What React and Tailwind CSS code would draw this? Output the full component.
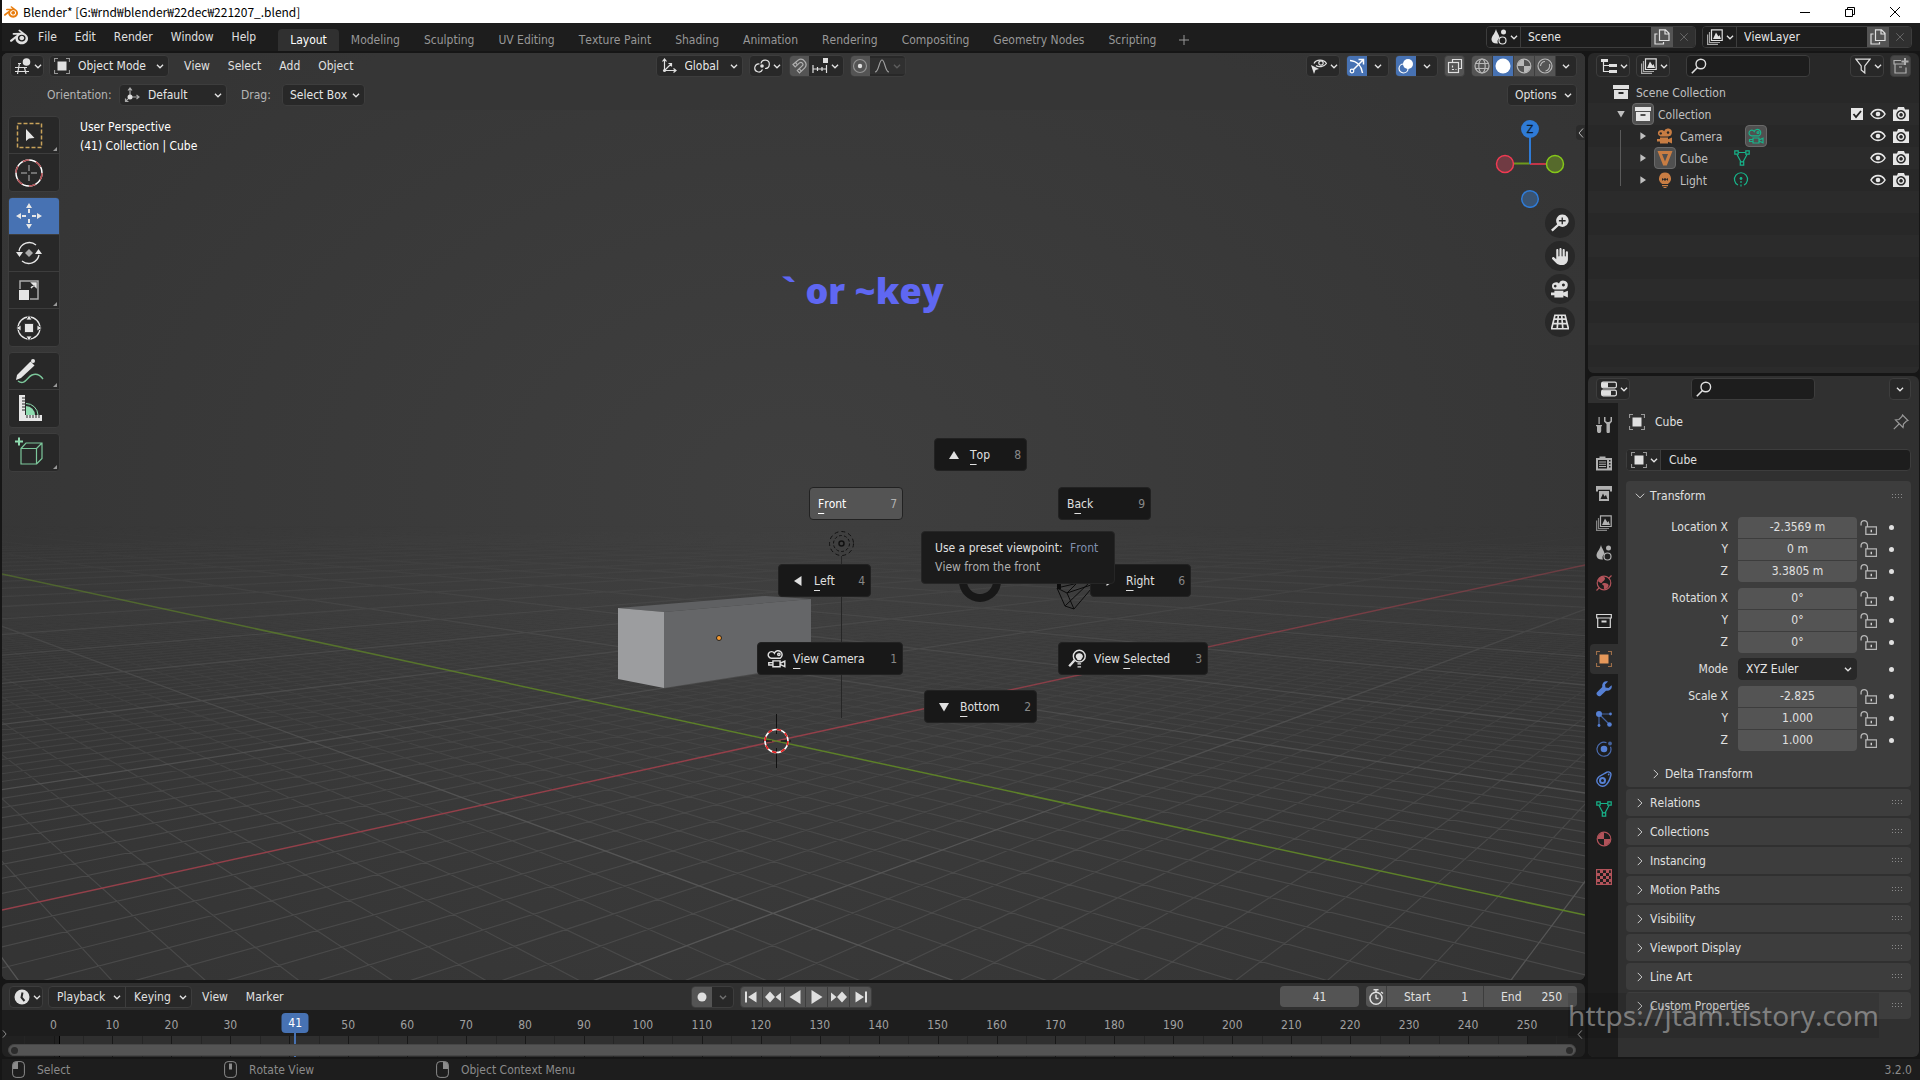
import React from 'react';
import clsx from 'clsx';
import { SiBlender } from 'react-icons/si';
import { FaHand } from 'react-icons/fa6';

const line = { fill: 'none', stroke: 'currentColor', strokeWidth: 1.2 };
const fill = { fill: 'currentColor' };

// 16x16 icon drawings
const ICONS = {
  chevron: <path d="M4.5 6.5 8 10l3.5-3.5" fill="none" stroke="currentColor" strokeWidth="1.5" />,
  chevronRight: <path d="M5 2.5 10.5 8 5 13.5" {...line} />,
  chevronOpen: <path d="M2.5 5 8 10.5 13.5 5" {...line} />,
  view3d: (
    <>
      <path d="M0 9.5h12M0 13.5h14M4.5 5 2.5 16M9.500 9.500 11 16M3 5.500h3" {...line} />
      <circle cx="11.500" cy="4" r="3.800" {...fill} />
    </>
  ),
  objectMode: (
    <>
      <path d="M.5 4V.5H4M12 .5h3.500V4M15.500 12v3.500H12M4 15.500H.5V12" {...line} opacity=".6" />
      <rect x="3.500" y="3.500" width="9" height="9" {...fill} />
    </>
  ),
  axes: (
    <>
      <path d="M3.500 1v11.500H15M3.500 12.500l7-7M1.500 3.500l2-2.500 2 2.500M12.500 10.500l2.500 2-2.500 2M7.500 5.500h3v3" {...line} />
      <circle cx="3.500" cy="12.500" r="1.500" {...fill} />
    </>
  ),
  axesSmall: (
    <>
      <path d="M6 9V1M4 3.500 6 1l2 2.500M8 10h7M12.500 8l2.500 2-2.500 2M4 12l-2.500 2.500M1.500 11.500v3h3" {...line} opacity=".7" />
      <circle cx="6" cy="10" r="2.500" {...fill} />
    </>
  ),
  pivot: (
    <>
      <path d="M8.500 11.500a4 4 0 1 1-3-5.500M7 5.500a4.200 4.200 0 1 1 4 5" {...line} />
      <circle cx="8" cy="8" r="1.800" {...fill} />
    </>
  ),
  magnet: (
    <>
      <path d="M2 6.500 7 2.200a5.200 5.200 0 0 1 6.500 8L8.500 15 6.300 12.500l4.900-4.600a2 2 0 0 0-2.700-3L4.200 9z" {...line} />
      <path d="m4.500 4.500 2 2.300M10.500 13.200l-2.300-2.400" {...line} />
    </>
  ),
  snap: (
    <>
      <path d="M1 7v8M5.500 9v4M10 9v4M14.500 7v8M1 11h13.500" {...line} />
      <rect x="11" y="0" width="5" height="5" {...fill} />
    </>
  ),
  proportional: (
    <>
      <circle cx="8" cy="8" r="6.500" {...line} opacity=".45" />
      <circle cx="8" cy="8" r="2.200" {...fill} />
    </>
  ),
  falloff: <path d="M1 14c4 0 4-12 7-12s3 12 7 12" {...line} />,
  visibility: (
    <>
      <path d="M3 5.500C5 1 13 1 15.500 5.500 13 9 7.500 9.500 5 7.500" {...line} />
      <circle cx="10" cy="5" r="2.200" {...line} />
      <path d="m0 7 8 4-3.500 1L3 16z" {...fill} />
    </>
  ),
  gizmo: (
    <>
      <path d="M1 2.500C8 3 12.500 8 13.500 15M4 12 14 2M9.500 1.500H14.500V6.500" {...line} strokeWidth="1.500" />
      <circle cx="3" cy="13" r="1.800" {...line} />
    </>
  ),
  overlay: (
    <>
      <circle cx="10" cy="6" r="5" {...fill} />
      <circle cx="5.500" cy="10.500" r="4.500" {...line} />
    </>
  ),
  xray: (
    <>
      <path d="M5.500 4.500V1.500h9v9h-3" {...line} />
      <rect x="1.500" y="4.500" width="10" height="10" {...line} />
      <path d="M5.500 7.500v4h4" {...line} strokeDasharray="2 1.500" />
    </>
  ),
  wireSphere: (
    <>
      <circle cx="8" cy="8" r="7" {...line} />
      <ellipse cx="8" cy="8" rx="3.200" ry="7" {...line} />
      <path d="M1.500 5.500h13M1.500 10.500h13" {...line} />
    </>
  ),
  solidSphere: <circle cx="8" cy="8" r="7.500" {...fill} />,
  matSphere: (
    <>
      <circle cx="8" cy="8" r="6.800" {...line} />
      <path d="M8 8V1.500A6.500 6.500 0 0 0 1.500 8zM8 8h6.500A6.500 6.500 0 0 1 8 14.500z" {...fill} />
    </>
  ),
  renderSphere: (
    <>
      <circle cx="8" cy="8" r="7" {...line} />
      <path d="M3.500 8A4.500 4.500 0 0 1 8 3.500M12.500 6c1 3-1 6.500-4 7" {...line} />
    </>
  ),
  scene: (
    <>
      <path d="M5 0c1 4 3.500 6 3.500 9A4 4 0 0 0 7 14.500C3 15 .5 13 .5 10.500.5 7 4 4.500 5 0z" {...fill} />
      <circle cx="12.500" cy="3" r="2.500" {...fill} />
      <circle cx="11.500" cy="11.500" r="3.500" {...line} />
    </>
  ),
  viewLayer: (
    <>
      <path d="M4.500.8h10.700v10.700H4.500z" {...line} />
      <path d="m6 10 3-6.500 2.500 4L12.500 6 14 10z" {...fill} />
      <path d="M2.500 3v10.500H13M.6 5.500v9.900H11" {...line} opacity=".7" />
    </>
  ),
  copy: (
    <>
      <path d="M5.500.8h6l3.500 3.500v7.200H5.500zM11 1v4h4" {...line} />
      <path d="M3.500 5H1v10h8.500v-2" {...line} />
    </>
  ),
  close: <path d="m3 3 10 10M13 3 3 13" {...line} />,
  outliner: (
    <>
      <path d="M0 1h7v3H0zM8 6h8v3H8zM8 12h8v3H8z" {...fill} />
      <path d="M2.500 4v9.500H8M2.500 7.500H8" {...line} />
    </>
  ),
  search: (
    <>
      <circle cx="9.800" cy="6" r="4.800" {...line} strokeWidth="1.400" />
      <path d="M6.500 9.500.8 15.200" {...line} strokeWidth="1.600" />
    </>
  ),
  filter: <path d="M1 1.200h14L9.800 8v7L6.200 12V8z" {...line} />,
  newCollection: (
    <>
      <path d="M8 2.500H1V6h10M2 6v9h11V9.500M6 9h3" {...line} />
      <path d="M12 0v7M8.500 3.500h7" {...line} strokeWidth="2" />
    </>
  ),
  collection: (
    <path fillRule="evenodd" d="M0 1h16v4H0zM1 6h14v9H1zM5.500 8v2h5V8z" {...fill} />
  ),
  collectionLine: (
    <>
      <path d="M.7 1.500h14.600V5H.7zM1.700 5v9.500h12.600V5" {...line} />
      <path d="M5.500 7.500h5v2h-5z" {...fill} />
    </>
  ),
  camera: (
    <>
      <path fillRule="evenodd" d="M3.500 2.200a3 3 0 0 1 3.600 1A4 4 0 1 1 11 8.500H3.500a3.200 3.200 0 0 1 0-6.300zM3.700 4.200a1.200 1.200 0 1 0 .1 0zM11 3.200a1.300 1.300 0 1 0 .1 0z" {...fill} />
      <path d="M3 9.500h8v1.700l4-1.700v6l-4-1.700v1.700H3zM0 11h3v2.500H0z" {...fill} />
    </>
  ),
  cameraLine: (
    <>
      <path d="M3.500 7.800a2.800 2.800 0 1 1 2.700-4.300 3.400 3.400 0 1 1 4.800 4.300zM5 10h6v5H5zM11 12l4-1.800v4.600L11 13M5 11.500H1.500v2H5" {...line} />
      <circle cx="10" cy="4.500" r="1" {...line} />
    </>
  ),
  meshTri: <path fillRule="evenodd" d="M.5 1h15L9.800 15.500H6.200zM5 4l3 7.500L11 4z" {...fill} />,
  meshData: (
    <>
      <path d="M3 4.500 7 12M13 4.500 9 12M4.500 2.500h7" {...line} />
      <path d="M.8.8h3.400v3.400H.8zM11.800.8h3.400v3.400h-3.400zM6.300 11.800h3.400v3.400H6.300z" {...line} />
    </>
  ),
  bulb: (
    <path fillRule="evenodd" d="M8 .5a6 6 0 0 1 3.300 11V12H4.700v-.5A6 6 0 0 1 8 .5zM5 6v3l1.500-1.500L8 9l1.500-1.500L11 9V6L9.500 7 8 6 6.500 7zM5 13h6v1.200H5zM6.500 15h3v1h-3z" {...fill} />
  ),
  lightData: (
    <>
      <path d="M5 13A6.500 6.500 0 1 1 11 13" {...line} />
      <circle cx="8" cy="6.500" r="1.400" {...fill} />
      <path d="M8 9v7" {...line} strokeDasharray="2 1.500" />
    </>
  ),
  eye: (
    <>
      <path d="M1 8c3-5.800 11-5.800 14 0-3 5.800-11 5.800-14 0z" fill="none" stroke="currentColor" strokeWidth="1.600" />
      <circle cx="8" cy="8" r="2.300" {...fill} />
    </>
  ),
  photo: (
    <path fillRule="evenodd" d="M0 3.500h4L5 1h6l1 2.500h4V15H0zM8 4a4.800 4.800 0 1 0 .1 0zM8 5.500a3.300 3.300 0 1 1-.1 0zM8 7a1.800 1.800 0 1 0 .1 0z" {...fill} />
  ),
  properties: (
    <>
      <rect x=".6" y="1.200" width="14.800" height="5.600" rx="1.500" {...line} />
      <rect x=".6" y="9.200" width="14.800" height="5.600" rx="1.500" {...line} />
      <path d="M1 1.500h6v5H1zM1 9.500h9v5H1z" {...fill} />
    </>
  ),
  pin: <path d="m9.500 1 5.500 5.500-1.500.5-3 3-.5 3.500L2.500 6 6 5.500l3-3zM6 10 .8 15.200" {...line} />,
  tool: (
    <>
      <path d="M2.500 0h1.200v7H2.500zM1 8.500h4.200V14a2.100 2.100 0 0 1-4.200 0zM0 8h6v1.300H0z" {...fill} />
      <path d="M8 0v4.500L10.500 7v7.500a1.700 1.700 0 0 0 3.400 0V7L16 4.500V0h-1.500v4L13 5h-2L9.500 4V0z" {...fill} />
    </>
  ),
  render: (
    <path fillRule="evenodd" d="M3.500 1.500h6V3H16v12.500H0V3h3.500zM2 5v8.500h9V5zM13 5v1.500h1.500V5zM13 8v1.500h1.500V8zM13 11v1.500h1.500V11zM3 6.500h7v1H3zM3 8.700h7v1H3zM3 11h7v1H3z" {...fill} />
  ),
  output: (
    <>
      <path d="M0 1h16v5.500h-2V4.800H2v1.700H0z" {...fill} />
      <path fillRule="evenodd" d="M3 6h10v10H3zM4.500 14h7L10 10l-1.500 1.500L7 8.500z" {...fill} />
    </>
  ),
  world: (
    <>
      <circle cx="8" cy="8" r="6.800" {...line} />
      <path d="M3 3c3-2 6-1.500 6 .5S7 6 6 7.500 3 7 2 6zM8 8c3 0 5 1 4.500 3S10 14.500 8.500 14 9 11 7 10s0-2 1-2z" {...fill} />
      <path d="m12.500 3.500 3-3M.5 15.500l3-3" {...line} />
    </>
  ),
  wrench: (
    <path d="M15.500 4.200 12.500 7l-3-.5L9 3.500 12 .5C8.500-.6 5.500 2 6.300 6L1 11.300c-1.800 2 1.500 5.300 3.700 3.500L10 9.700c4 .8 6.800-2.500 5.500-5.500z" {...fill} />
  ),
  particles: (
    <>
      <circle cx="3" cy="3" r="3" {...fill} />
      <circle cx="14.500" cy="3" r="1.400" {...fill} />
      <circle cx="3" cy="14.500" r="1.400" {...fill} />
      <circle cx="13.500" cy="13.500" r="2.300" {...fill} />
      <path d="M3 3h11M3 3v11M3 3l10 10" {...line} opacity=".7" />
    </>
  ),
  physics: (
    <>
      <circle cx="8" cy="8" r="3.300" {...fill} />
      <path d="M10.500 1.700a7 7 0 1 0 4 4" {...line} opacity=".8" />
      <circle cx="14" cy="2.500" r="1.900" {...fill} opacity=".7" />
    </>
  ),
  constraint: (
    <>
      <path d="M1.500 7.500C4 4 8 3 11 1.200c2.500-1 4.500 1 3.800 3.300C14 8 13 11 10.500 13.500c-5 4.500-11.500-1-9-6z" {...line} strokeWidth="1.400" />
      <circle cx="6.500" cy="9.500" r="2.500" fill="none" stroke="currentColor" strokeWidth="2" />
      <circle cx="12.700" cy="3.500" r=".9" {...fill} />
    </>
  ),
  texture: (
    <>
      <path d="M.6.6h14.800v14.800H.6z" {...line} />
      <path d="M4 1h3v3H4zM10 1h3v3h-3zM1 4h3v3H1zM7 4h3v3H7zM13 4h2v3h-2zM4 7h3v3H4zM10 7h3v3h-3zM1 10h3v3H1zM7 10h3v3H7zM13 10h2v3h-2zM4 13h3v2H4zM10 13h3v2h-3z" {...fill} />
    </>
  ),
  unlock: (
    <>
      <path d="M1 6V4.500a3 3 0 0 1 6 0V7M5.500 7.500h10v7h-10z" {...line} opacity=".75" />
      <path d="M10 10h1.200v2.500H10z" {...fill} />
    </>
  ),
  clock: (
    <>
      <circle cx="8" cy="8" r="7.500" {...fill} />
      <path d="M8.500 3.500 7.500 8.500l3 3.500" fill="none" stroke="#282828" strokeWidth="2" />
    </>
  ),
  record: <circle cx="8" cy="8" r="4.500" {...fill} />,
  jumpStart: <path d="M2 2.500h2v11H2zM13.500 2.500v11L5 8z" {...fill} />,
  prevKey: <path d="m5 2.500 5 5.500-5 5.500L0 8zM16 3.500v9L10.500 8z" {...fill} />,
  playBack: <path d="M13.500 1v14L2.500 8z" {...fill} />,
  play: <path d="M2.500 1v14l11-7z" {...fill} />,
  nextKey: <path d="m11 2.500 5 5.500-5 5.500L6 8zM0 3.500v9L5.500 8z" {...fill} />,
  jumpEnd: <path d="M12 2.500h2v11h-2zM2.500 2.500v11L11 8z" {...fill} />,
  stopwatch: (
    <>
      <circle cx="8" cy="9.200" r="6" {...line} strokeWidth="1.500" />
      <path d="M5.500.7h5M8 1v2.500M13 3l2 1.500M8 9.500V5.500M8 9.500h2.500" {...line} strokeWidth="1.500" />
    </>
  ),
  viewSelected: (
    <>
      <circle cx="9.500" cy="6" r="5" {...line} />
      <path d="M5.500 9.500 1 14.500" {...line} strokeWidth="2" />
      <path d="M7 6.500a2.500 2.500 0 0 1 5 0L10.500 9h-2zM8 12.500h3M8 15h3" stroke="currentColor" {...fill} />
    </>
  ),
  triUp: <path d="M8 4 13 12H3z" {...fill} />,
  triDown: <path d="M3 4h10L8 12.500z" {...fill} />,
  triLeft: <path d="M11.500 3v10L4 8z" {...fill} />,
  triRight: <path d="M4.500 3v10L12 8z" {...fill} />,
  magnify: (
    <>
      <path d="M10 .5a5.500 5.500 0 1 1-3 10L1.500 15.500 0 14l5.500-5A5.500 5.500 0 0 1 10 .5z" {...fill} />
      <path d="M10 3v6M7 6h6" stroke="#282828" strokeWidth="1.200" />
    </>
  ),
  ortho: <path d="M3.500 2h9L15.500 14H.5zM2.500 5.500h11M1.500 9.500h13M6.500 2 5.500 14M9.500 2l1 12" {...line} strokeWidth="1.500" />,
};

const Icon = ({ name, className = 'size-4' }) => (
  <svg viewBox="0 0 16 16" className={clsx('shrink-0', className)} aria-hidden="true">
    {ICONS[name]}
  </svg>
);

const box = 'rounded border border-[#3d3d3d] bg-[#282828]';

const IconDrop = ({ icon, label, className = 'w-[34px]' }) => (
  <button aria-label={label} className={clsx('flex h-[22px] shrink-0 items-center justify-between pl-1 pr-px', box, className)}>
    <Icon name={icon} />
    <Icon name="chevron" className="size-[14px]" />
  </button>
);

const Select = ({ label, value, icon, className, selectClass }) => (
  <div className={clsx('relative flex h-[22px] shrink-0 items-center', box, className)}>
    {icon && <Icon name={icon} className="ml-1 size-4" />}
    <select
      aria-label={label}
      defaultValue={value}
      className={clsx('h-full min-w-0 flex-1 appearance-none bg-transparent text-[#e6e6e6] outline-none', selectClass)}
    >
      <option>{value}</option>
    </select>
    <Icon name="chevron" className="pointer-events-none absolute right-px size-[14px]" />
  </div>
);

const MenuButton = ({ children }) => <button className="h-[22px] px-[9px]">{children}</button>;

const SearchField = () => (
  <label className="flex h-[22px] w-[124px] items-center rounded border border-[#3d3d3d] bg-[#1d1d1d] px-1">
    <Icon name="search" />
    <input type="search" aria-label="Search" className="w-full min-w-0 bg-transparent px-1 outline-none" />
  </label>
);

const TitleBar = () => (
  <div className="flex h-[23px] shrink-0 items-center bg-white text-black">
    <SiBlender className="ml-[2px] size-[14px] text-[#e87d0d]" />
    <h1 className="ml-[5px] font-['Noto_Sans_CJK_KR',sans-serif] text-[12px]">Blender* [G:₩rnd₩blender₩22dec₩221207_.blend]</h1>
    <div className="ml-auto flex pr-[3px]">
      {['M3 8.500h10', 'M3.500 5.500h7v7h-7zM5.500 5.500v-2h7v7h-2', 'm3 3 10 10M13 3 3 13'].map((d, i) => (
        <button key={d} aria-label={['Minimize', 'Restore', 'Close'][i]} className="flex h-[22px] w-[45px] items-center justify-center">
          <svg viewBox="0 0 16 16" className="size-4">
            <path d={d} fill="none" stroke="black" />
          </svg>
        </button>
      ))}
    </div>
  </div>
);

const IdField = ({ icon, value, className }) => (
  <div className={clsx('flex h-[22px] overflow-hidden rounded border border-[#3d3d3d] bg-[#1d1d1d]', className)}>
    <button aria-label={`Browse ${value}`} className="flex w-[34px] shrink-0 items-center justify-between border-r border-[#3d3d3d] bg-[#1d1d1d] pl-1 pr-px">
      <Icon name={icon} />
      <Icon name="chevron" className="size-[14px]" />
    </button>
    <input aria-label={`${value} name`} defaultValue={value} className="min-w-0 flex-1 bg-transparent px-[7px] text-[#e6e6e6] outline-none" />
    <button aria-label={`New ${value}`} className="flex w-[22px] items-center justify-center bg-[#545454]">
      <Icon name="copy" />
    </button>
    <button aria-label={`Remove ${value}`} className="flex w-[22px] items-center justify-center bg-[#303030] text-[#6a6a6a]">
      <Icon name="close" className="size-3" />
    </button>
  </div>
);

const WORKSPACES = [
  'Layout', 'Modeling', 'Sculpting', 'UV Editing', 'Texture Paint', 'Shading',
  'Animation', 'Rendering', 'Compositing', 'Geometry Nodes', 'Scripting',
];

const TopBar = () => (
  <header className="flex h-7 shrink-0 items-start bg-[#1d1d1d] pl-2 pr-2">
    <SiBlender className="mt-[5px] size-[18px]" />
    <nav className="ml-px mt-[3px] flex">
      {['File', 'Edit', 'Render', 'Window', 'Help'].map((m) => (
        <MenuButton key={m}>{m}</MenuButton>
      ))}
    </nav>
    <nav className="ml-[13px] mt-[6px] flex">
      {WORKSPACES.map((w, i) => (
        <button key={w} className={clsx('h-[22px] rounded-t px-3', i === 0 ? 'bg-[#303030] text-white' : 'text-[#989898]')}>
          {w}
        </button>
      ))}
      <button aria-label="Add workspace" className="flex w-8 items-center justify-center text-[#989898]">
        <svg viewBox="0 0 10 10" className="size-[10px]">
          <path d="M5 0v10M0 5h10" stroke="currentColor" />
        </svg>
      </button>
    </nav>
    <div className="ml-auto mt-[3px] flex gap-[6px]">
      <IdField icon="scene" value="Scene" className="w-[210px]" />
      <IdField icon="viewLayer" value="ViewLayer" className="w-[210px]" />
    </div>
  </header>
);

const ToggleDrop = ({ icon, label, on, dim }) => (
  <div className={clsx('flex h-[22px] overflow-hidden', box)}>
    <button aria-label={label} className={clsx('flex w-5 items-center justify-center', on ? 'bg-[#4772b3] text-white' : 'bg-[#545454]')}>
      <Icon name={icon} />
    </button>
    <button aria-label={`${label} options`} className={clsx('flex w-[21px] items-center justify-center', dim && 'opacity-40')}>
      <Icon name="chevron" className="size-[14px]" />
    </button>
  </div>
);

const ViewportHeader = () => (
  <div className="relative flex flex-col gap-[7px] bg-[#353535]/60 px-[8px] pb-1 pt-[2px]">
    <div className="grid grid-cols-[1fr_auto_1fr] items-center">
      <div className="flex items-center">
        <IconDrop icon="view3d" label="Editor type" />
        <Select label="Mode" icon="objectMode" value="Object Mode" className="ml-[5px] w-[120px]" selectClass="pl-2" />
        <div className="ml-[6px] flex">
          {['View', 'Select', 'Add', 'Object'].map((m) => (
            <MenuButton key={m}>{m}</MenuButton>
          ))}
        </div>
      </div>
      <div className="mr-[26px] flex gap-[6px]">
        <Select label="Transform orientation" icon="axes" value="Global" className="w-[87px]" selectClass="pl-2" />
        <IconDrop icon="pivot" label="Pivot point" />
        <div className={clsx('flex h-[22px] w-[55px] items-center overflow-hidden', box)}>
          <button aria-label="Snap" className="flex h-full w-5 items-center justify-center bg-[#545454] text-[#b0b0b0]">
            <Icon name="magnet" />
          </button>
          <button aria-label="Snap to" className="flex flex-1 items-center justify-between pl-[3px] pr-px">
            <Icon name="snap" />
            <Icon name="chevron" className="size-[14px]" />
          </button>
        </div>
        <div className={clsx('flex h-[22px] w-[56px] items-center overflow-hidden', box)}>
          <button aria-label="Proportional editing" className="flex h-full w-5 items-center justify-center bg-[#545454]">
            <Icon name="proportional" />
          </button>
          <button aria-label="Falloff" className="flex flex-1 items-center justify-between bg-[#303030] pl-1 pr-px text-[#a0a0a0]">
            <Icon name="falloff" />
            <Icon name="chevron" className="size-[14px] opacity-40" />
          </button>
        </div>
      </div>
      <div className="flex justify-end gap-[6px]">
        <IconDrop icon="visibility" label="Object visibility" />
        <ToggleDrop icon="gizmo" label="Gizmos" on />
        <ToggleDrop icon="overlay" label="Overlays" on />
        <button aria-label="X-ray" className="flex h-[22px] w-[21px] items-center justify-center rounded border border-[#3d3d3d] bg-[#545454]">
          <Icon name="xray" />
        </button>
        <div className={clsx('flex h-[22px] w-[106px] overflow-hidden', box)}>
          {['wireSphere', 'solidSphere', 'matSphere', 'renderSphere'].map((s, i) => (
            <button
              key={s}
              aria-label={s}
              className={clsx('flex flex-1 items-center justify-center border-r border-[#3d3d3d]', i === 1 ? 'bg-[#4772b3] text-white' : 'bg-[#545454] text-[#b8b8b8]')}
            >
              <Icon name={s} />
            </button>
          ))}
          <button aria-label="Shading options" className="flex flex-1 items-center justify-center">
            <Icon name="chevron" className="size-[14px]" />
          </button>
        </div>
      </div>
    </div>
    <div className="flex items-center">
      <label className="ml-[37px] w-[65px] text-[#b5b5b5]">Orientation:</label>
      <Select label="Orientation" icon="axesSmall" value="Default" className="ml-[7px] w-[108px]" selectClass="pl-2" />
      <label className="ml-[14px] w-[30px] text-[#b5b5b5]">Drag:</label>
      <Select label="Drag" value="Select Box" className="ml-[11px] w-[83px]" selectClass="pl-[7px]" />
      <button className={clsx('ml-auto flex h-[22px] w-[70px] items-center justify-between pl-[7px] pr-px', box)}>
        Options
        <Icon name="chevron" className="size-[14px]" />
      </button>
    </div>
  </div>
);

// ground plane to screen, in the 1583x927 space of the viewport drawing
const A = 0.0212;
const B = 0.0208;
const project = (x, y) => {
  const w = 1 + A * x + B * y;
  return `${((774 + A * x * 1866.6 - B * y * 331) / w).toFixed(1)} ${((688 + (w - 1) * 450) / w).toFixed(1)}`;
};

const gridPath = (keep, far) => {
  let d = '';
  for (let i = -200; i <= 200; i++) {
    if (!keep(i)) continue;
    d += `M${project(i, (0.42 - 1 - A * i) / B)}L${project(i, (far - 1 - A * i) / B)}`;
    d += `M${project((0.42 - 1 - B * i) / A, i)}L${project((far - 1 - B * i) / A, i)}`;
  }
  return d;
};
const minorGrid = gridPath((i) => i % 10 !== 0, 8);
const majorGrid = gridPath((i) => i % 10 === 0 && i !== 0, 14);

const SceneCanvas = () => (
  <svg viewBox="0 0 1583 927" preserveAspectRatio="xMidYMid slice" className="absolute inset-0 size-full">
    <defs>
      <radialGradient id="bg" gradientUnits="userSpaceOnUse" cx="791" cy="440" r="1000" gradientTransform="translate(0 120) scale(1 .72)">
        <stop offset="0" stopColor="#3f3f3f" />
        <stop offset="1" stopColor="#343434" />
      </radialGradient>
      <linearGradient id="fadeMinor" x1="0" y1="0" x2="0" y2="927" gradientUnits="userSpaceOnUse">
        <stop offset=".53" stopColor="#000" />
        <stop offset=".63" stopColor="#444" />
        <stop offset=".85" stopColor="#fff" />
      </linearGradient>
      <linearGradient id="fadeMajor" x1="0" y1="0" x2="0" y2="927" gradientUnits="userSpaceOnUse">
        <stop offset=".51" stopColor="#000" />
        <stop offset=".62" stopColor="#777" />
        <stop offset=".85" stopColor="#fff" />
      </linearGradient>
      <linearGradient id="axisFade" x1="0" y1="0" x2="0" y2="927" gradientUnits="userSpaceOnUse">
        <stop offset=".5" stopColor="#666" />
        <stop offset=".72" stopColor="#fff" />
      </linearGradient>
      <mask id="minor"><rect width="1583" height="927" fill="url(#fadeMinor)" /></mask>
      <mask id="major"><rect width="1583" height="927" fill="url(#fadeMajor)" /></mask>
      <mask id="axis"><rect width="1583" height="927" fill="url(#axisFade)" /></mask>
    </defs>
    <rect width="1583" height="927" fill="url(#bg)" />
    <path d={minorGrid} stroke="#494949" strokeWidth="1.200" mask="url(#minor)" />
    <path d={majorGrid} stroke="#555" strokeWidth="1.300" mask="url(#major)" />
    <g mask="url(#axis)" strokeWidth="1.500">
      <path d="M0 857 774 688 1583 512" stroke="#93404a" />
      <path d="M0 521 774 688 1583 862" stroke="#5d8029" />
    </g>

    {/* stretched cube */}
    <path d="M616 555 763 543 809 546 662 559z" fill="#5f6062" />
    <path d="M662 559 809 546V612L662 635z" fill="#656668" />
    <path d="M616 555 662 559V635L616 626z" fill="#9c9d9f" />
    <circle cx="717" cy="585" r="2.500" fill="#f79a2e" stroke="#222" />

    {/* light */}
    <g fill="none" stroke="#111">
      <circle cx="839.500" cy="490.500" r="12" strokeDasharray="4 3" />
      <circle cx="839.500" cy="490.500" r="8" strokeDasharray="3 2" />
      <circle cx="839.500" cy="490.500" r="2.500" strokeWidth="1.500" />
      <path d="M839.500 503V665" stroke="#262626" />
    </g>

    {/* camera wire */}
    <path d="M1055 535l10 5 24-24M1055 535l8 18 9 3 17-20M1065 540l7 16M1055 535l34-8M1063 553l26-25M1065 540l24-8" fill="none" stroke="#0c0c0c" />
    <path d="M1055 530h4v6h-4z" fill="#0c0c0c" />

    {/* 3D cursor */}
    <path d="M774.500 661v20M774.500 695v20M761 688h9M779 688h10" stroke="#111" />
    <circle cx="774.500" cy="688" r="11.500" fill="none" stroke="#fff" strokeWidth="1.600" />
    <circle cx="774.500" cy="688" r="11.500" fill="none" stroke="#e81e1e" strokeWidth="1.600" strokeDasharray="4.500 4.500" />

    {/* pie menu centre */}
    <circle cx="978" cy="528" r="17" fill="none" stroke="#181818" strokeWidth="8" />
  </svg>
);

const white = '#e6e6e6';
const TOOL_ART = {
  'Select Box': (
    <>
      <rect x="2.500" y="2.500" width="24" height="24" fill="none" stroke="#c8a25a" strokeWidth="1.500" strokeDasharray="4 2" />
      <path d="M11 8v12l3-2.500 5.500-.5z" fill={white} />
    </>
  ),
  Cursor: (
    <>
      <circle cx="14" cy="14" r="13" fill="none" stroke="#fff" strokeWidth="1.500" />
      <circle cx="14" cy="14" r="13" fill="none" stroke="#b04a4f" strokeWidth="1.500" strokeDasharray="6.800 6.800" />
      <path d="M14 6v6M14 16v6M6 14h6M16 14h6" stroke="#888" strokeWidth="1.500" />
    </>
  ),
  Move: (
    <>
      <path d="M14 1l3 5h-6zM14 27l3-5h-6zM1 14l5-3v6zM27 14l-5-3v6z" fill={white} />
      <path d="M14 7v4M14 17v4M7 14h4M17 14h4" stroke={white} strokeWidth="2" />
    </>
  ),
  Rotate: (
    <>
      <path d="M4 12a10.500 10.500 0 0 1 17-6M24 16a10.500 10.500 0 0 1-17 6" fill="none" stroke={white} strokeWidth="1.300" />
      <path d="M1 13h7l-3.500 5zM20 15h7l-3.500-5z" fill={white} />
      <path d="m14 10 4 4-4 4-4-4z" fill="#aaa" />
    </>
  ),
  Scale: (
    <>
      <path d="M5 13V5h18v18h-8" fill="none" stroke="#aaa" strokeWidth="1.500" />
      <path d="M4 14h10v10H4z" fill={white} />
      <path d="m16 12 4-4M17 7h4v4z" stroke={white} strokeWidth="1.500" fill={white} />
    </>
  ),
  Transform: (
    <>
      <circle cx="14" cy="14" r="11" fill="none" stroke={white} strokeWidth="1.300" />
      <path d="M9.500 9.500h9v9h-9zM14 1l3 5h-6zM14 27l3-5h-6zM1 14l5-3v6zM27 14l-5-3v6z" fill={white} stroke="#282828" strokeWidth=".8" />
    </>
  ),
  Annotate: (
    <>
      <path d="M3 24c7 5 9-4 14-6s8 0 11 4" fill="none" stroke="#7cc79b" strokeWidth="1.400" />
      <path d="M1 23l1-5L15.500 4.500l4 4L6 21z" fill={white} />
      <circle cx="18" cy="4" r="2" fill={white} />
    </>
  ),
  Measure: (
    <>
      <path d="M4 0h6v20h17v6H4z" fill={white} />
      <path d="M7 3h3M7 6h3M7 9h3M7 12h3M7 15h3M12 20v3M15 20v3M18 20v3M21 20v3M24 20v3" stroke="#282828" />
      <path d="M11 20v-9a9 9 0 0 1 9 9z" fill="#8fdcb0" />
      <path d="M11 8.500A12 12 0 0 1 23 20" fill="none" stroke="#8fdcb0" />
    </>
  ),
  'Add Cube': (
    <>
      <path d="M6 9.500h15.500V25H6zM6 9.500 11 4h16v15.500L21.500 25M21.500 9.500 27 4" fill="none" stroke="#7cc79b" strokeWidth="1.200" />
      <path d="M4-1.500v8M0 2.500h8" stroke="#8fdcb0" strokeWidth="2" />
    </>
  ),
};

const TOOL_GROUPS = [
  ['Select Box', 'Cursor'],
  ['Move', 'Rotate', 'Scale', 'Transform'],
  ['Annotate', 'Measure'],
  ['Add Cube'],
];
const WITH_FLYOUT = ['Select Box', 'Scale', 'Annotate', 'Add Cube'];

const Toolbar = () => (
  <div className="flex flex-col gap-[5px]">
    {TOOL_GROUPS.map((group) => (
      <div key={group[0]} className={clsx('flex w-[52px] flex-col divide-y divide-[#3d3d3d] overflow-hidden', box)}>
        {group.map((tool) => (
          <button key={tool} aria-label={tool} className={clsx('relative flex h-[37px] items-center pl-[6px]', tool === 'Move' && 'bg-[#4772b3]')}>
            <svg viewBox="0 0 28 28" className="size-7 overflow-visible">
              {TOOL_ART[tool]}
            </svg>
            {WITH_FLYOUT.includes(tool) && (
              <svg viewBox="0 0 4 4" className="absolute bottom-[2px] right-[2px] size-1">
                <path d="M4 0v4H0z" fill="#999" />
              </svg>
            )}
          </button>
        ))}
      </div>
    ))}
  </div>
);

const NavGizmo = () => (
  <svg viewBox="0 0 70 90" className="mr-[10px] h-[90px] w-[70px]">
    <path d="M10 45.500h25" stroke="#6f9a1c" strokeWidth="2" />
    <path d="M35 46h20" stroke="#c23548" strokeWidth="2" />
    <path d="M35 46V12" stroke="#2f7bd6" strokeWidth="2" />
    <circle cx="10" cy="46" r="8.500" fill="#703b43" stroke="#f03a52" strokeWidth="1.500" />
    <circle cx="60" cy="46" r="8.500" fill="#566a2c" stroke="#85c819" strokeWidth="1.500" />
    <circle cx="35" cy="81" r="8.300" fill="#3a5472" stroke="#2f7bd6" strokeWidth="1.500" />
    <circle cx="35" cy="11" r="9" fill="#2f7bd6" />
    <text x="35" y="15" textAnchor="middle" fontSize="11" fill="#0b1c30" stroke="#0b1c30" strokeWidth=".3">Z</text>
  </svg>
);

const NavButtons = () => (
  <div className="flex flex-col gap-[3px]">
    {['magnify', 'hand', 'camera', 'ortho'].map((n) => (
      <button key={n} aria-label={n} className="flex size-[30px] items-center justify-center rounded-full bg-[#282828]">
        {n === 'hand' ? <FaHand className="size-[17px]" /> : <Icon name={n} className="size-[18px]" />}
      </button>
    ))}
  </div>
);

// label is split around its mnemonic letter
const PIE = [
  { pos: 'left-[932px] top-[385px] w-[93px]', icon: 'triUp', label: ['', 'T', 'op'], hint: 8 },
  { pos: 'left-[807px] top-[434px] w-[94px]', label: ['', 'F', 'ront'], hint: 7, active: true },
  { pos: 'left-[1056px] top-[434px] w-[93px]', label: ['B', 'a', 'ck'], hint: 9 },
  { pos: 'left-[776px] top-[511px] w-[93px]', icon: 'triLeft', label: ['', 'L', 'eft'], hint: 4 },
  { pos: 'left-[1088px] top-[511px] w-[101px]', icon: 'triRight', label: ['', 'R', 'ight'], hint: 6 },
  { pos: 'left-[755px] top-[589px] w-[146px]', icon: 'cameraLine', big: true, label: ['', 'V', 'iew Camera'], hint: 1 },
  { pos: 'left-[1056px] top-[589px] w-[150px]', icon: 'viewSelected', big: true, label: ['View ', 'S', 'elected'], hint: 3 },
  { pos: 'left-[922px] top-[637px] w-[113px]', icon: 'triDown', label: ['', 'B', 'ottom'], hint: 2 },
];

const PieMenu = () => (
  <>
    {PIE.map(({ pos, icon, big, label, hint, active }) => (
      <button
        key={hint}
        className={clsx(
          'absolute flex h-[33px] items-center rounded border pl-2 pr-[5px]',
          pos,
          active ? 'border-[#222] bg-[#545454] text-white' : 'border-[#222] bg-[#181818]'
        )}
      >
        {icon && <Icon name={icon} className={big ? 'ml-px mr-[7px] size-[19px]' : 'ml-[3px] mr-2 size-4'} />}
        <span>
          {label[0]}
          <u className="underline-offset-[5px]">{label[1]}</u>
          {label[2]}
        </span>
        <span className={clsx('ml-auto', active ? 'text-[#b0b0b0]' : 'text-[#888]')}>{hint}</span>
      </button>
    ))}
    <div role="tooltip" className="absolute left-[919px] top-[478px] w-[194px] rounded border border-[#262626] bg-[#1b1b1b] px-[13px] pb-[6px] pt-[7px] leading-[19px]">
      <p className="whitespace-nowrap">
        Use a preset viewpoint: <span className="ml-1 text-[#8090b0]">Front</span>
      </p>
      <p className="text-[#b0b0b0]">View from the front</p>
    </div>
  </>
);

const Viewport = () => (
  <main className="relative min-h-0 flex-1 overflow-hidden rounded-md bg-[#393939]">
    <SceneCanvas />
    <ViewportHeader />
    <div className="relative flex items-start pl-[6px] pr-[10px] pt-[6px]">
      <Toolbar />
      <div className="ml-5 pt-[2px] leading-[19px] text-white">
        <p>User Perspective</p>
        <p>(41) Collection | Cube</p>
      </div>
      <div className="ml-auto flex flex-col items-end pt-[2px]">
        <NavGizmo />
        <NavButtons />
      </div>
    </div>
    <button aria-label="Show sidebar" className="absolute right-0 top-[72px] flex h-[15px] w-[9px] items-center justify-center rounded-l bg-[#2b2b2b]">
      <svg viewBox="0 0 6 10" className="h-[10px] w-[6px]">
        <path d="M5 .5 1 5l4 4.500" fill="none" stroke="#bbb" />
      </svg>
    </button>
    <p className="absolute left-[779px] top-[214px] whitespace-pre font-['Open_Sans',sans-serif] text-[36px] font-extrabold leading-[48px] text-[#5f67f2]">` or ~key</p>
    <PieMenu />
  </main>
);

// frame number to percent of the timeline's width
const frameX = (f) => `${((51.5 + f * 5.894) / 1583) * 100}%`;
const TENS = Array.from({ length: 26 }, (_, i) => i * 10);
const FIVES = Array.from({ length: 53 }, (_, i) => i * 5 - 5);

const Timeline = () => (
  <section className="shrink-0 overflow-hidden rounded-md bg-[#1d1d1d]">
    <div className="flex h-[27px] items-center bg-[#303030] px-[7px]">
      <div className="flex flex-1 items-center">
        <IconDrop icon="clock" label="Editor type" />
        <div className={clsx('ml-[5px] flex h-[22px] divide-x divide-[#3d3d3d]', box)}>
          <button className="flex w-[77px] items-center justify-between pl-2 pr-px">
            Playback <Icon name="chevron" className="size-[14px]" />
          </button>
          <button className="flex w-[65px] items-center justify-between pl-2 pr-px">
            Keying <Icon name="chevron" className="size-[14px]" />
          </button>
        </div>
        <div className="ml-px flex">
          <MenuButton>View</MenuButton>
          <MenuButton>Marker</MenuButton>
        </div>
      </div>
      <div className="mr-[24px] flex gap-[6px]">
        <ToggleDrop icon="record" label="Auto keying" dim />
        <div className="flex h-[22px] w-[132px] overflow-hidden rounded border border-[#3d3d3d] bg-[#545454]">
          {['jumpStart', 'prevKey', 'playBack', 'play', 'nextKey', 'jumpEnd'].map((n) => (
            <button key={n} aria-label={n} className="flex flex-1 items-center justify-center border-r border-[#3d3d3d] last:border-r-0">
              <Icon name={n} />
            </button>
          ))}
        </div>
      </div>
      <div className="flex flex-1 justify-end">
        <input aria-label="Current frame" defaultValue="41" className="h-[21px] w-[79px] rounded bg-[#545454] text-center outline-none" />
        <div className="ml-[7px] mr-px flex h-[21px] divide-x divide-[#3d3d3d] overflow-hidden rounded bg-[#545454]">
          <button aria-label="Use preview range" className="flex w-[21px] items-center justify-center">
            <Icon name="stopwatch" />
          </button>
          <label className="flex w-[97px] items-center justify-between pl-[17px] pr-[15px]">
            Start <input defaultValue="1" className="w-8 bg-transparent text-right outline-none" />
          </label>
          <label className="flex w-[93px] items-center justify-between pl-[17px] pr-[15px]">
            End <input defaultValue="250" className="w-8 bg-transparent text-right outline-none" />
          </label>
        </div>
      </div>
    </div>
    <div className="relative h-[47px]">
      <div className="absolute bottom-0 top-[26px] w-full bg-[#212121]" />
      <div className="absolute bottom-0 top-[26px] bg-[#2f2f2f]" style={{ left: frameX(1), width: `${((249 * 5.894) / 1583) * 100}%` }} />
      {FIVES.map((f) => (
        <div
          key={f}
          className={clsx('absolute bottom-0 top-[26px] w-px', f % 10 === 0 ? 'bg-[#181818]' : 'bg-[#252525]')}
          style={{ left: frameX(f) }}
        />
      ))}
      <div className="absolute bottom-0 top-[26px] w-px bg-black" style={{ left: frameX(1) }} />
      {TENS.filter((f) => f !== 40).map((f) => (
        <span key={f} className="absolute top-2 -translate-x-1/2 leading-[14px] text-[#a0a0a0]" style={{ left: frameX(f) }}>
          {f}
        </span>
      ))}
      <div className="absolute bottom-0 top-[13px] w-[2px] -translate-x-1/2 bg-[#4772b3]" style={{ left: frameX(41) }} />
      <div className="absolute top-[3px] h-5 w-[27px] -translate-x-1/2 rounded bg-[#4772b3] text-center leading-5 text-white" style={{ left: frameX(41) }}>
        41
      </div>
      <div className="absolute bottom-px left-[6px] right-[9px] flex h-[12px] items-center justify-between rounded-full border border-[#464646] bg-[#545454] px-[2px]">
        <span className="size-[7px] rounded-full bg-[#2c2c2c]" />
        <span className="size-[7px] rounded-full bg-[#2c2c2c]" />
      </div>
      <svg viewBox="0 0 6 10" className="absolute left-0 top-[20px] h-[8px] w-[5px]">
        <path d="M1 .5 5 5 1 9.500" fill="none" stroke="#aaa" />
      </svg>
      <svg viewBox="0 0 6 10" className="absolute right-[2px] top-[20px] h-[9px] w-[6px]">
        <path d="M5 .5 1 5l4 4.500" fill="none" stroke="#aaa" />
      </svg>
    </div>
  </section>
);

const ObjIcon = ({ name, boxed, className }) => (
  <span className={clsx('flex size-[22px] shrink-0 items-center justify-center rounded', boxed && 'border border-[#696969] bg-[#505050]', className)}>
    <Icon name={name} />
  </span>
);

const OUTLINER_OBJECTS = [
  { name: 'Camera', icon: 'camera', data: 'cameraLine', dataBoxed: true },
  { name: 'Cube', icon: 'meshTri', boxed: true, data: 'meshData' },
  { name: 'Light', icon: 'bulb', data: 'lightData' },
];

const RowToggles = () => (
  <>
    <button aria-label="Hide in viewport"><Icon name="eye" /></button>
    <button aria-label="Disable in renders" className="ml-[7px]"><Icon name="photo" /></button>
  </>
);

const Outliner = () => (
  <section className="h-[320px] shrink-0 overflow-hidden rounded-md bg-[#282828]">
    <div className="flex h-7 items-start px-2 pt-[2px]">
      <IconDrop icon="outliner" label="Editor type" />
      <IconDrop icon="viewLayer" label="Display mode" className="ml-[6px] w-[34px]" />
      <div className="ml-4">
        <SearchField />
      </div>
      <IconDrop icon="filter" label="Filter" className="ml-auto w-[34px]" />
      <button aria-label="New collection" className="ml-[6px] flex h-[22px] w-[21px] items-center justify-center rounded border border-[#3d3d3d] bg-[#484848] text-[#b0b0b0]">
        <Icon name="newCollection" />
      </button>
    </div>
    <ul className="relative text-[#c0c0c0]">
      <li className="flex h-[22px] items-center pl-[25px]">
        <Icon name="collection" className="size-4 text-[#e0e0e0]" />
        <span className="ml-[7px] pt-px">Scene Collection</span>
      </li>
      <li className="flex h-[22px] items-center bg-[#2b2b2b] pl-[27px] pr-[10px]">
        <Icon name="triDown" className="size-3" />
        <ObjIcon name="collection" boxed className="ml-[5px] text-[#e6e6e6]" />
        <span className="ml-1 pt-px">Collection</span>
        <span className="ml-auto flex items-center text-[#e6e6e6]">
          <label className="relative mr-[7px] flex size-3">
            <input type="checkbox" defaultChecked aria-label="Exclude collection" className="size-3 appearance-none bg-[#e6e6e6]" />
            <svg viewBox="0 0 12 12" className="pointer-events-none absolute inset-0">
              <path d="m2.500 6 2.500 3 5-6" fill="none" stroke="#222" strokeWidth="1.800" />
            </svg>
          </label>
          <RowToggles />
        </span>
      </li>
      {OUTLINER_OBJECTS.map((o, i) => (
        <li key={o.name} className={clsx('flex h-[22px] items-center pl-[49px] pr-[10px]', i === 1 && 'bg-[#2b2b2b]')}>
          <Icon name="triRight" className="size-3" />
          <ObjIcon name={o.icon} boxed={o.boxed} className="ml-[5px] text-[#c87d43]" />
          <span className="ml-1 pt-px">{o.name}</span>
          <ObjIcon name={o.data} boxed={o.dataBoxed} className="ml-[23px] text-[#17b48a]" />
          <span className="ml-auto flex items-center text-[#e6e6e6]">
            <RowToggles />
          </span>
        </li>
      ))}
      {[0, 1, 2, 3, 4, 5, 6, 7, 8].map((i) => (
        <li key={i} className={clsx('h-[22px]', i % 2 === 0 && 'bg-[#2b2b2b]')} />
      ))}
      <span className="absolute left-8 top-[49px] h-14 w-px bg-[#5a5a5a]" />
    </ul>
  </section>
);

const TAB_GROUPS = [
  [['tool', 'text-[#b0b0b0]']],
  [['render', 'text-[#b0b0b0]'], ['output', 'text-[#b0b0b0]'], ['viewLayer', 'text-[#b0b0b0]'], ['scene', 'text-[#b0b0b0]'], ['world', 'text-[#b2535a]']],
  [['collectionLine', 'text-[#d8d8d8]']],
  [
    ['objectMode', 'text-[#e6985a]'], ['wrench', 'text-[#5680d4]'], ['particles', 'text-[#5680d4]'], ['physics', 'text-[#5680d4]'],
    ['constraint', 'text-[#5680d4]'], ['meshData', 'text-[#17b48a]'], ['matSphere', 'text-[#b2535a]'],
  ],
  [['texture', 'text-[#b2535a]']],
];

const Grip = () => (
  <svg viewBox="0 0 11 5" className="h-[5px] w-[11px]">
    <path d="M0 .5h11M0 3.500h11" stroke="#8a8a8a" strokeDasharray="1 2" />
  </svg>
);

const NumRow = ({ label, value, first, last }) => (
  <div className="flex h-[22px] items-center">
    <label htmlFor={label + value} className="w-[102px] shrink-0 text-right">
      {label.split('|')[0]}
    </label>
    <input
      id={label + value}
      defaultValue={value}
      className={clsx('ml-[10px] mr-[3px] h-[21px] min-w-0 flex-1 bg-[#545454] text-center outline-none', first && 'rounded-t', last && 'rounded-b')}
    />
    <button aria-label="Lock"><Icon name="unlock" className="size-[17px]" /></button>
    <span className="ml-3 mr-[17px] size-[5px] rounded-full bg-[#e0e0e0]" />
  </div>
);

const NumGroup = ({ rows }) => (
  <div>
    {rows.map(([l, v], i) => (
      <NumRow key={l} label={l} value={v} first={i === 0} last={i === rows.length - 1} />
    ))}
  </div>
);

const Properties = () => (
  <section className="flex min-h-0 flex-1 flex-col overflow-hidden rounded-md bg-[#303030]">
    <div className="flex h-[27px] shrink-0 items-center px-2 pb-px">
      <IconDrop icon="properties" label="Editor type" />
      <div className="ml-[61px]">
        <SearchField />
      </div>
      <button aria-label="Options" className={clsx('ml-auto flex h-[22px] w-[22px] items-center justify-center', box)}>
        <Icon name="chevron" className="size-[14px]" />
      </button>
    </div>
    <div className="flex min-h-0 flex-1">
      <nav className="flex w-[30px] shrink-0 flex-col gap-2 bg-[#1d1d1d] pt-[7px]">
        {TAB_GROUPS.map((g) => (
          <div key={g[0][0]} className="flex flex-col">
            {g.map(([n, color]) => (
              <button
                key={n}
                aria-label={n}
                className={clsx('ml-[2px] flex h-[30px] items-center justify-center rounded-l', color, n === 'objectMode' && 'bg-[#303030]')}
              >
                <Icon name={n} />
              </button>
            ))}
          </div>
        ))}
      </nav>
      <div className="min-w-0 flex-1 pl-2 pr-[8px]">
        <div className="flex h-[38px] items-center pl-[3px] pr-[2px]">
          <Icon name="objectMode" />
          <span className="ml-[10px]">Cube</span>
          <button aria-label="Pin" className="ml-auto text-[#989898]"><Icon name="pin" /></button>
        </div>
        <div className="mt-2 flex h-[22px] overflow-hidden rounded border border-[#3d3d3d] bg-[#1d1d1d]">
          <button aria-label="Browse object" className="flex w-[34px] shrink-0 items-center justify-between border-r border-[#3d3d3d] bg-[#282828] pl-1 pr-px">
            <Icon name="objectMode" />
            <Icon name="chevron" className="size-[14px]" />
          </button>
          <input aria-label="Object name" defaultValue="Cube" className="min-w-0 flex-1 bg-transparent px-2 outline-none" />
        </div>
        <div className="mt-[10px] flex flex-col gap-[2px]">
          <section className="rounded bg-[#3d3d3d]">
            <button className="flex h-[30px] w-full items-center pl-2 pr-2">
              <Icon name="chevronOpen" className="size-3" />
              <span className="ml-1">Transform</span>
              <span className="ml-auto"><Grip /></span>
            </button>
            <div className="mt-[5px] flex flex-col gap-[5px]">
              <NumGroup rows={[['Location X', '-2.3569 m'], ['Y', '0 m'], ['Z', '3.3805 m']]} />
              <NumGroup rows={[['Rotation X', '0°'], ['Y|rot', '0°'], ['Z|rot', '0°']]} />
              <div className="flex h-[22px] items-center">
                <span className="w-[102px] text-right">Mode</span>
                <Select label="Rotation mode" value="XYZ Euler" className="ml-[10px] mr-[32px] flex-1 border-[#282828]" selectClass="pl-[7px]" />
                <span className="mr-[17px] size-[5px] rounded-full bg-[#e0e0e0]" />
              </div>
              <NumGroup rows={[['Scale X', '-2.825'], ['Y|scale', '1.000'], ['Z|scale', '1.000']]} />
            </div>
            <button className="mt-[9px] flex h-[27px] items-center pl-6">
              <Icon name="chevronRight" className="size-3" />
              <span className="ml-[3px]">Delta Transform</span>
            </button>
          </section>
          {['Relations', 'Collections', 'Instancing', 'Motion Paths', 'Visibility', 'Viewport Display', 'Line Art', 'Custom Properties'].map((p) => (
            <button key={p} className="flex h-[27px] items-center rounded bg-[#3d3d3d] px-2">
              <Icon name="chevronRight" className="size-3" />
              <span className="ml-1">{p}</span>
              <span className="ml-auto"><Grip /></span>
            </button>
          ))}
        </div>
      </div>
    </div>
  </section>
);

const Mouse = ({ d }) => (
  <svg viewBox="0 0 13 17" className="h-[17px] w-[13px]">
    <rect x=".6" y=".6" width="11.800" height="15.800" rx="3.500" fill="none" stroke="#8b8b8b" />
    <path d={d} fill="#8b8b8b" />
  </svg>
);

const StatusBar = () => (
  <footer className="flex h-[21px] shrink-0 items-center bg-[#1d1d1d] pl-[10px] pr-2 text-[#8b8b8b]">
    <div className="flex w-[212px] items-center gap-3"><Mouse d="M1 4a3 3 0 0 1 3-3h2v7H1z" />Select</div>
    <div className="flex w-[212px] items-center gap-3"><Mouse d="M5 2.500h3v6H5z" />Rotate View</div>
    <div className="flex items-center gap-3"><Mouse d="M7 1h2a3 3 0 0 1 3 3v4H7z" />Object Context Menu</div>
    <span className="ml-auto">3.2.0</span>
  </footer>
);

const App = () => (
  <div className="relative flex h-screen flex-col overflow-hidden bg-[#161616] pl-[2px] font-['DejaVu_Sans_Condensed','DejaVu_Sans',sans-serif] text-[12px] leading-[14px] text-[#e0e0e0] [font-kerning:none]">
    <TitleBar />
    <TopBar />
    <div className="flex min-h-0 flex-1 gap-[3px] pb-[2px] pr-px pt-[2px]">
      <div className="flex min-w-0 flex-1 flex-col gap-[3px]">
        <Viewport />
        <Timeline />
      </div>
      <aside className="flex w-[331px] shrink-0 flex-col gap-[3px]">
        <Outliner />
        <Properties />
      </aside>
    </div>
    <StatusBar />
    <p className="pointer-events-none absolute bottom-[42px] right-[41px] bg-black/10 font-['Noto_Sans',sans-serif] text-[28px] leading-[45px] text-[#b4b4b4]/60">
      https://jtam.tistory.com
    </p>
  </div>
);

export default App;
